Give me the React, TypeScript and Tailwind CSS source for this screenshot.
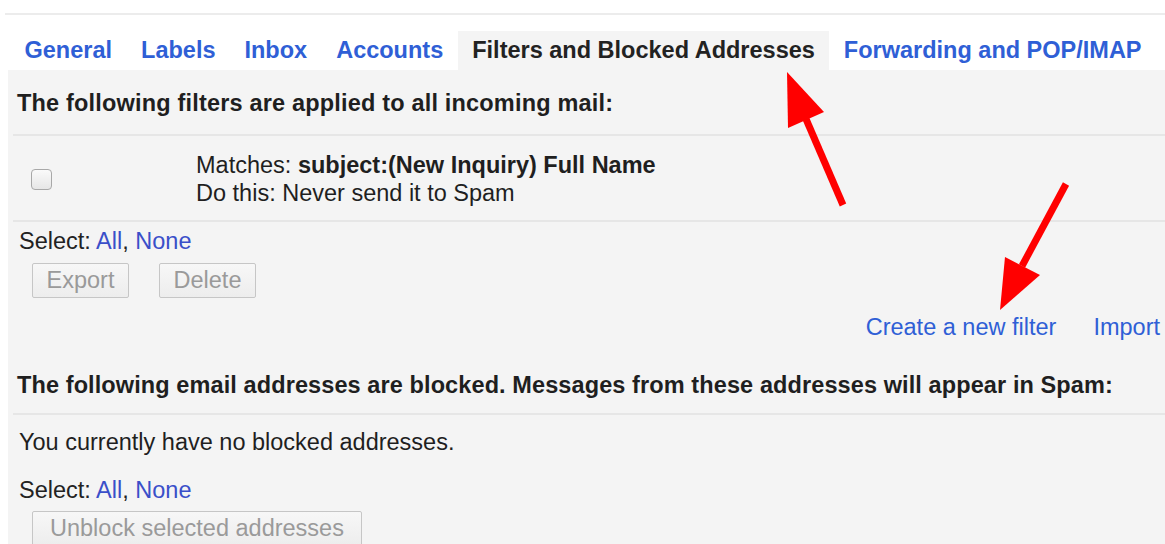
import React from 'react';

const tabs = [
  { label: 'General' },
  { label: 'Labels' },
  { label: 'Inbox' },
  { label: 'Accounts' },
  { label: 'Filters and Blocked Addresses', active: true },
  { label: 'Forwarding and POP/IMAP' }
];

const Divider = () => <div className="h-[2px] bg-[#e6e6e6]" />;

const GrayButton = ({ label, className = '' }: { label: string; className?: string }) => (
  <button
    disabled
    className={`h-[35px] px-[13px] rounded-[2px] border border-[#c6c6c6] bg-gradient-to-b from-[#f7f7f7] to-[#ededed] text-[#9a9a9a] leading-[27px] ${className}`}
  >
    {label}
  </button>
);

const SelectLinks = ({ className = '' }: { className?: string }) => (
  <div className={`leading-[27px] text-[#222] ${className}`}>
    Select: <span className="text-[#3a4fc9]">All</span>, <span className="text-[#3a4fc9]">None</span>
  </div>
);

// red callout arrows drawn on top of the settings page
const Arrows = () => (
  <svg className="absolute inset-0 pointer-events-none" width="1165" height="544" viewBox="0 0 1165 544">
    <line x1="806" y1="119" x2="843" y2="205" stroke="#ff0000" strokeWidth="7" />
    <polygon points="787,72 788,128 824,112" fill="#ff0000" />
    <line x1="1022" y1="266" x2="1066" y2="184" stroke="#ff0000" strokeWidth="7" />
    <polygon points="1000,310 1005,257 1040,275" fill="#ff0000" />
  </svg>
);

export default function App() {
  return (
    <div className="relative w-[1165px] h-[544px] overflow-hidden bg-white text-[23.5px] font-['Liberation_Sans',Arial,sans-serif] text-[#1f1f1f]">
      {/* top rule */}
      <div className="mt-[13px] ml-[5px] h-[2px] bg-[#ececec]" />

      {/* settings tabs */}
      <div className="mt-[16px] pl-[10px] flex">
        {tabs.map((t) => (
          <div
            key={t.label}
            className={`px-[14.5px] py-[6px] leading-[27px] font-bold whitespace-nowrap ${
              t.active ? 'bg-[#f4f4f4] text-[#222]' : 'text-[#2f5fd6]'
            }`}
          >
            {t.label}
          </div>
        ))}
      </div>

      {/* tab body */}
      <div className="ml-[8px] pl-[5px] h-[474px] bg-[#f4f4f4]">
        <div className="pt-[20px] pl-[4px] leading-[27px] font-bold tracking-[0.18px]">
          The following filters are applied to all incoming mail:
        </div>
        <div className="mt-[17px]">
          <Divider />
        </div>

        <div className="flex items-center pt-[15px] pb-[13px]">
          <div className="w-[183px] pl-[18px] flex items-center">
            <div className="w-[21px] h-[21px] rounded-[4px] border border-[#a8a8a8] bg-gradient-to-b from-[#fafafa] to-[#e6e6e6]" />
          </div>
          <div className="leading-[28px]">
            <div>
              Matches: <span className="font-bold">subject:(New Inquiry) Full Name</span>
            </div>
            <div>Do this: Never send it to Spam</div>
          </div>
        </div>
        <Divider />

        <SelectLinks className="mt-[6px] pl-[6px]" />
        <div className="mt-[8px] pl-[19px] flex gap-[30px]">
          <GrayButton label="Export" className="w-[97px]" />
          <GrayButton label="Delete" className="w-[97px]" />
        </div>

        <div className="mt-[16px] pr-[5px] flex justify-end gap-[37px] leading-[27px] text-[#2f5fd6]">
          <span>Create a new filter</span>
          <span>Import</span>
        </div>

        <div className="mt-[31px] pl-[4px] leading-[27px] font-bold tracking-[0.1px]">
          The following email addresses are blocked. Messages from these addresses will appear in Spam:
        </div>
        <div className="mt-[14px]">
          <Divider />
        </div>

        <div className="mt-[14px] pl-[6px] leading-[27px]">You currently have no blocked addresses.</div>
        <SelectLinks className="mt-[21px] pl-[6px]" />
        <div className="mt-[7px] pl-[19px]">
          <GrayButton label="Unblock selected addresses" className="px-[17px]" />
        </div>
      </div>

      <Arrows />
    </div>
  );
}
